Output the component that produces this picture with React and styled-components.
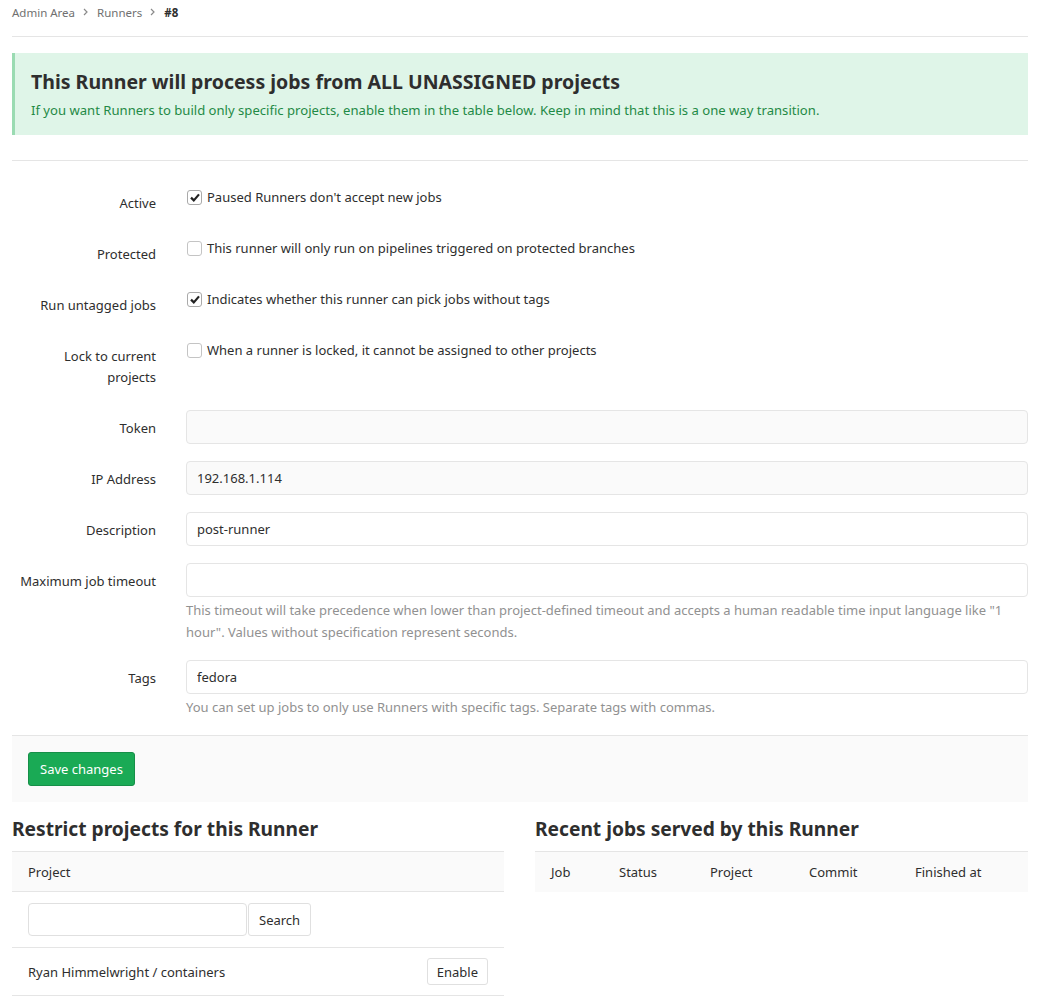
import React from 'react'
import styled, { createGlobalStyle } from 'styled-components'

const GlobalStyle = createGlobalStyle`
  html, body {
    margin: 0;
    padding: 0;
    background: #fff;
  }
  body {
    font-family: "Noto Sans", "Open Sans", sans-serif;
    font-size: 13px;
    color: #2e2e2e;
  }
  * {
    box-sizing: border-box;
  }
`

const checkboxRows = [
  { label: 'Active', text: "Paused Runners don't accept new jobs", checked: true },
  {
    label: 'Protected',
    text: 'This runner will only run on pipelines triggered on protected branches',
    checked: false,
  },
  {
    label: 'Run untagged jobs',
    text: 'Indicates whether this runner can pick jobs without tags',
    checked: true,
  },
  {
    label: 'Lock to current projects',
    text: 'When a runner is locked, it cannot be assigned to other projects',
    checked: false,
  },
]

const inputRows = [
  { label: 'Token', value: '', readOnly: true },
  { label: 'IP Address', value: '192.168.1.114', readOnly: true },
  { label: 'Description', value: 'post-runner' },
  {
    label: 'Maximum job timeout',
    value: '',
    help: 'This timeout will take precedence when lower than project-defined timeout and accepts a human readable time input language like "1 hour". Values without specification represent seconds.',
  },
  {
    label: 'Tags',
    value: 'fedora',
    help: 'You can set up jobs to only use Runners with specific tags. Separate tags with commas.',
  },
]

const jobColumns = [
  { name: 'Job', width: 68 },
  { name: 'Status', width: 91 },
  { name: 'Project', width: 99 },
  { name: 'Commit', width: 106 },
  { name: 'Finished at', width: 'auto' },
]

const CheckMark = () => (
  <svg width="10" height="9" viewBox="0 0 10 9">
    <path d="M1 4.6 L3.8 7.4 L9 1.4" fill="none" stroke="#222" strokeWidth="2.2" />
  </svg>
)

const Chevron = () => (
  <svg width="5" height="8" viewBox="0 0 5 8">
    <path d="M1 1 L4 4 L1 7" fill="none" stroke="#8a8a8a" strokeWidth="1.2" />
  </svg>
)

const App = () => {
  return (
    <>
      <GlobalStyle />
      <Page>
        <Breadcrumbs>
          <Crumb>Admin Area</Crumb>
          <Sep>
            <Chevron />
          </Sep>
          <Crumb>Runners</Crumb>
          <Sep>
            <Chevron />
          </Sep>
          <Crumb current>#8</Crumb>
        </Breadcrumbs>

        <Alert>
          <h4>This Runner will process jobs from ALL UNASSIGNED projects</h4>
          <p>
            If you want Runners to build only specific projects, enable them in the table below.
            Keep in mind that this is a one way transition.
          </p>
        </Alert>

        <Form>
          {checkboxRows.map(({ label, text, checked }) => (
            <FormRow key={label}>
              <Label>{label}</Label>
              <CheckLine>
                <Box checked={checked}>{checked && <CheckMark />}</Box>
                {text}
              </CheckLine>
            </FormRow>
          ))}
          {inputRows.map(({ label, value, readOnly, help }) => (
            <FormRow key={label}>
              <Label>{label}</Label>
              <div>
                <Input readOnly={readOnly} defaultValue={value} />
                {help && <Help>{help}</Help>}
              </div>
            </FormRow>
          ))}
          <Actions>
            <SaveButton>Save changes</SaveButton>
          </Actions>
        </Form>

        <Columns>
          <section>
            <SectionTitle>Restrict projects for this Runner</SectionTitle>
            <Table>
              <thead>
                <tr>
                  <th>Project</th>
                  <th></th>
                </tr>
              </thead>
              <tbody>
                <tr>
                  <SearchCell colSpan={2}>
                    <SearchForm>
                      <SearchInput />
                      <Button>Search</Button>
                    </SearchForm>
                  </SearchCell>
                </tr>
                <tr>
                  <td>Ryan Himmelwright / containers</td>
                  <ActionCell>
                    <Button small>Enable</Button>
                  </ActionCell>
                </tr>
              </tbody>
            </Table>
          </section>
          <section>
            <SectionTitle>Recent jobs served by this Runner</SectionTitle>
            <Table>
              <thead>
                <tr>
                  {jobColumns.map(({ name, width }) => (
                    <JobHead key={name} width={width}>
                      {name}
                    </JobHead>
                  ))}
                </tr>
              </thead>
            </Table>
          </section>
        </Columns>
      </Page>
    </>
  )
}

const Page = styled.div`
  width: 1016px;
  margin-left: 12px;
  padding-bottom: 20px;
`

const Breadcrumbs = styled.div`
  display: flex;
  align-items: center;
  height: 37px;
  padding-bottom: 12px;
  border-bottom: 1px solid #e5e5e5;
  font-size: 11.5px;
  color: #707070;
`

const Crumb = styled.span`
  color: ${({ current }) => (current ? '#2e2e2e' : '#707070')};
  font-weight: ${({ current }) => (current ? 700 : 400)};
`

const Sep = styled.span`
  display: flex;
  margin: 0 9px 0 8px;
`

const Alert = styled.div`
  margin-top: 16px;
  padding: 16px 18px 15px 16px;
  background: #dff5e8;
  border-left: 3px solid #9adbb2;

  h4 {
    margin: 0 0 5px;
    font-size: 19.5px;
    font-weight: 700;
    line-height: 26px;
    color: #2e2e2e;
  }

  p {
    margin: 0;
    font-size: 13.1px;
    line-height: 20px;
    color: #1f8a46;
  }
`

const Form = styled.form`
  margin-top: 25px;
  padding-top: 24px;
  border-top: 1px solid #e5e5e5;
`

const FormRow = styled.div`
  display: grid;
  grid-template-columns: 144px 1fr;
  column-gap: 30px;
  margin-bottom: 17px;
  min-height: 34px;
`

const Label = styled.label`
  text-align: right;
  padding-top: 8px;
  padding-bottom: 5px;
  line-height: 21px;
`

const CheckLine = styled.div`
  display: flex;
  align-items: flex-start;
  gap: 5px;
  padding-top: 2px;
  line-height: 20px;
`

const Box = styled.span`
  display: flex;
  align-items: center;
  justify-content: center;
  flex: none;
  width: 15px;
  height: 15px;
  margin: 3px 0 0 1px;
  border: 1px solid ${({ checked }) => (checked ? '#aaa' : '#c4c4c4')};
  border-radius: 3px;
  background: #fff;
`

const Input = styled.input`
  display: block;
  width: 100%;
  height: 34px;
  padding: 6px 10px;
  font: inherit;
  font-size: 13px;
  color: #2e2e2e;
  border: 1px solid #e5e5e5;
  border-radius: 4px;
  background: ${({ readOnly }) => (readOnly ? '#fafafa' : '#fff')};
  outline: none;
`

const Help = styled.p`
  margin: 2px 0 0;
  font-size: 13px;
  line-height: 22px;
  color: #919191;
`

const Actions = styled.div`
  margin-top: 16px;
  padding: 16px;
  background: #fafafa;
  border-top: 1px solid #e5e5e5;
`

const SaveButton = styled.button`
  height: 34px;
  padding: 0 11px;
  font: inherit;
  font-size: 13px;
  color: #fff;
  background: #1aaa55;
  border: 1px solid #168f48;
  border-radius: 3px;
`

const Columns = styled.div`
  display: grid;
  grid-template-columns: 492px 1fr;
  column-gap: 31px;
`

const SectionTitle = styled.h4`
  margin: 15px 0 10px;
  font-size: 19.2px;
  font-weight: 700;
  line-height: 24px;
  color: #2e2e2e;
`

const Table = styled.table`
  width: 100%;
  border-collapse: collapse;

  th {
    height: 40px;
    padding: 0 16px;
    text-align: left;
    font-weight: 400;
    background: #fafafa;
    border-top: 1px solid #e5e5e5;
    border-bottom: 1px solid #e5e5e5;
  }

  td {
    height: 48px;
    padding: 0 16px;
    border-bottom: 1px solid #e5e5e5;
  }
`

const JobHead = styled.th`
  width: ${({ width }) => (typeof width === 'number' ? `${width}px` : width)};
  && {
    border-bottom: none;
  }
`

const SearchCell = styled.td`
  && {
    height: 56px;
  }
`

const ActionCell = styled.td`
  text-align: right;
`

const SearchForm = styled.div`
  display: flex;
  gap: 1px;
`

const SearchInput = styled.input`
  width: 219px;
  height: 33px;
  font: inherit;
  border: 1px solid #e0e0e0;
  border-radius: 4px;
  outline: none;
`

const Button = styled.button`
  height: ${({ small }) => (small ? '27px' : '33px')};
  padding: 0 ${({ small }) => (small ? '9px' : '10px')};
  font: inherit;
  font-size: 13px;
  color: #2e2e2e;
  background: #fff;
  border: 1px solid #e0e0e0;
  border-radius: 3px;
`

export default App
